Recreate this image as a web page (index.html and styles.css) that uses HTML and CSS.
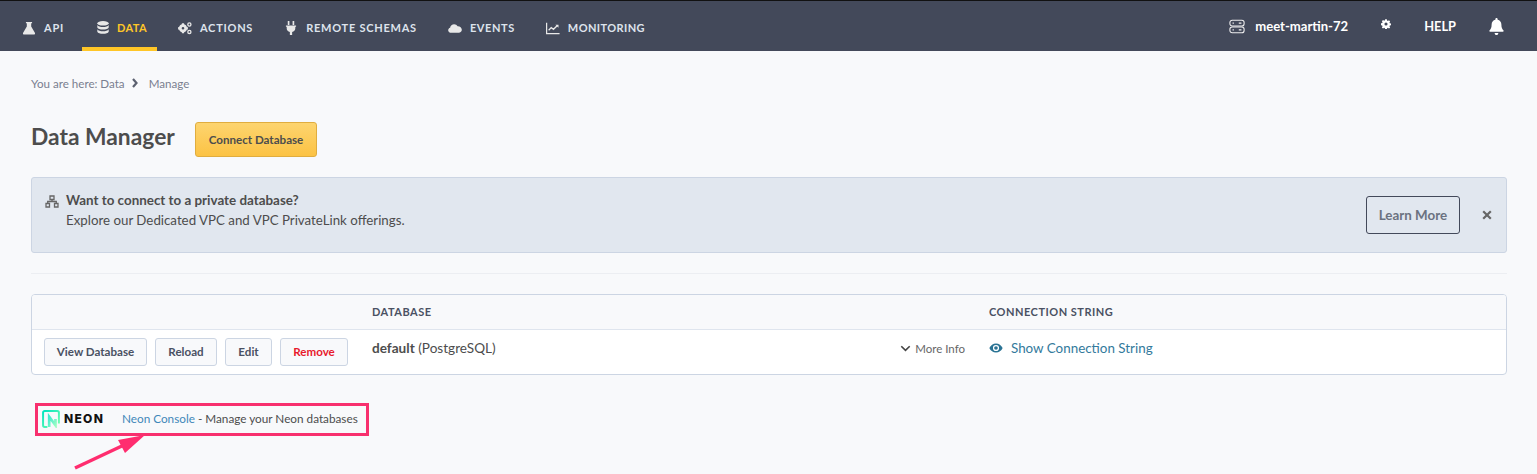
FILE: index.html
```html
<!DOCTYPE html>
<html lang="en">
<head>
  <meta charset="UTF-8" />
  <meta name="viewport" content="width=device-width, initial-scale=1" />
  <title>Data Manager</title>
  <link rel="stylesheet" href="styles.css">
</head>
<body>
  <header class="topbar">
    <nav class="nav-left">
      <a class="nav-item nav-api" href="#">
        <svg class="nav-icon" viewBox="0 0 16 16"><path d="M4.500 1h7v1.500h-1v3.800l4.200 7c.6 1.200 0 2.200-1.200 2.200H2.500c-1.200 0-1.800-1-1.200-2.200l4.200-7V2.500h-1z"/></svg>
        API
      </a>
      <a class="nav-item nav-data active" href="#">
        <svg class="nav-icon db-icon" viewBox="0 0 16 16"><ellipse cx="8" cy="3.200" rx="6.500" ry="2.600"/><path d="M1.500 5.200c1 1.700 3.500 2.300 6.500 2.300s5.500-.6 6.500-2.300v2.700c-.6 1.600-3.300 2.400-6.500 2.400s-5.900-.8-6.500-2.400z"/><path d="M1.500 10c1 1.700 3.500 2.300 6.500 2.300s5.500-.6 6.500-2.300v2.800c-.6 1.600-3.300 2.400-6.500 2.400s-5.900-.8-6.500-2.400z"/></svg>
        DATA
      </a>
      <a class="nav-item nav-actions" href="#">
        <svg class="nav-icon" viewBox="0 0 16 16"><circle cx="5.700" cy="8.300" r="3" fill="none" stroke="currentColor" stroke-width="3"/><path d="M4.500 2.700h2.400l.3 2h-3zM4.500 13.900h2.400l.3-2h-3zM.1 7v2.600l2 .3V6.700zM11.300 7v2.600l-2 .3V6.700z"/><circle cx="13" cy="4" r="1.800" fill="none" stroke="currentColor" stroke-width="1.500"/><circle cx="13" cy="12.500" r="1.800" fill="none" stroke="currentColor" stroke-width="1.500"/></svg>
        ACTIONS
      </a>
      <a class="nav-item nav-remote" href="#">
        <svg class="nav-icon" viewBox="0 0 16 16"><path d="M4.300 0h1.900v4.500H4.300zM9.800 0h1.900v4.500H9.800zM2.200 5h11.600v1.600h-.9v2c0 2.200-1.600 3.700-3.600 4V16H6.700v-3.400c-2-.3-3.600-1.800-3.600-4v-2h-.9z"/></svg>
        REMOTE SCHEMAS
      </a>
      <a class="nav-item nav-events" href="#">
        <svg class="nav-icon" viewBox="0 0 16 16"><path d="M3.600 13.500C1.600 13.500.2 12.200.2 10.500c0-1.400.9-2.500 2.200-2.900C2.800 5.400 4.700 3.700 7 3.700c1.700 0 3.200.9 4 2.400 2.500-.2 4.800 1.700 4.800 4 0 1.900-1.500 3.400-3.500 3.400z"/></svg>
        EVENTS
      </a>
      <a class="nav-item nav-monitoring" href="#">
        <svg class="nav-icon" viewBox="0 0 16 16"><path d="M.7 2v12.500H15.500" fill="none" stroke="currentColor" stroke-width="1.400"/><path d="M3 10.500 6 7.500l2.500 2L13 5.200" fill="none" stroke="currentColor" stroke-width="1.500"/><path d="M10.700 4.200h3.600v3.600z"/></svg>
        MONITORING
      </a>
    </nav>
    <div class="nav-right">
      <a class="project" href="#">
        <svg class="project-icon" viewBox="0 0 18 16"><rect x="1" y="1" width="16" height="6.500" rx="2.600"/><rect x="1" y="8.500" width="16" height="6.500" rx="2.600"/><path d="M4 4.200h1.500M11 4.200h3M4 11.800h1.500M11 11.800h3"/></svg>
        meet-martin-72
      </a>
      <a class="settings" href="#">
        <svg viewBox="0 0 16 16"><path fill-rule="evenodd" d="M6.700.5h2.600l.4 2 1.300.6 1.800-1.100 1.800 1.900-1.100 1.700.6 1.300 2 .4v2.600l-2 .4-.6 1.300 1.100 1.800-1.800 1.800-1.800-1.100-1.300.6-.4 2H6.700l-.4-2-1.300-.6-1.800 1.100-1.800-1.800 1.100-1.800-.6-1.300-2-.4V6.800l2-.4.6-1.300L1.400 3.400l1.800-1.900L5 2.600l1.300-.6zM8 5.500a2.500 2.500 0 1 0 0 5 2.500 2.500 0 0 0 0-5z"/></svg>
      </a>
      <a class="help" href="#">HELP</a>
      <a class="bell" href="#">
        <svg viewBox="0 0 16 18"><path d="M8 0c.7 0 1.200.5 1.200 1.200v.6c2.500.5 4 2.500 4 5 0 3.600 1 5 2.300 6.400.4.500.1 1.300-.7 1.300H1.200c-.8 0-1.100-.8-.7-1.300C1.800 11.800 2.800 10.400 2.800 6.800c0-2.500 1.500-4.500 4-5v-.6C6.800.5 7.300 0 8 0zM6 15.800h4c0 1.200-.9 2.200-2 2.200s-2-1-2-2.200z"/></svg>
      </a>
    </div>
  </header>

  <main class="content">
    <div class="breadcrumb">
      <span>You are here: Data</span>
      <svg class="crumb-sep" viewBox="0 0 8 10"><path d="M2 1l3.500 4L2 9"/></svg>
      <span>Manage</span>
    </div>

    <div class="page-head">
      <h2>Data Manager</h2>
      <button class="btn-yellow">Connect Database</button>
    </div>

    <section class="banner">
      <svg class="banner-icon" viewBox="0 0 14 13"><path d="M5 1h4v3.500H5zM1 8.500h3.500V12H1zM9.500 8.500H13V12H9.500zM7 4.500v2M2.700 8.500v-2h8.600v2"/></svg>
      <div class="banner-text">
        <strong>Want to connect to a private database?</strong>
        <span>Explore our Dedicated VPC and VPC PrivateLink offerings.</span>
      </div>
      <a class="btn-outline" href="#">Learn More</a>
      <svg class="banner-close" viewBox="0 0 10 10"><path d="M1.200 1.200l7.600 7.600M8.800 1.200L1.200 8.800"/></svg>
    </section>

    <hr class="divider" />

    <section class="db-table">
      <div class="db-row db-head">
        <div></div>
        <div>DATABASE</div>
        <div>CONNECTION STRING</div>
      </div>
      <div class="db-row db-body">
        <div class="db-actions">
          <button class="btn-plain btn-view">View Database</button>
          <button class="btn-plain btn-reload">Reload</button>
          <button class="btn-plain btn-edit">Edit</button>
          <button class="btn-plain btn-danger">Remove</button>
        </div>
        <div class="db-name">
          <span><b>default</b> (PostgreSQL)</span>
          <a class="more-info" href="#">
            <svg viewBox="0 0 12 8"><path d="M1.200 1.400 6 6.200l4.800-4.800"/></svg>
            More Info
          </a>
        </div>
        <div class="db-conn">
          <a class="show-conn" href="#">
            <svg viewBox="0 0 16 12"><path fill-rule="evenodd" d="M8 .5C4.500.5 1.600 2.600 0 6c1.600 3.400 4.500 5.500 8 5.500s6.400-2.100 8-5.500C14.400 2.600 11.500.5 8 .5zm0 1.800a3.700 3.700 0 1 1 0 7.400 3.700 3.700 0 0 1 0-7.400z"/><circle cx="8" cy="6" r="2.200"/></svg>
            Show Connection String
          </a>
        </div>
      </div>
    </section>

    <div class="neon-callout">
      <span class="neon-logo">
        <svg viewBox="0 0 20 20"><defs><linearGradient id="neon-grad" x1="0" y1="0" x2="1" y2="1"><stop offset="0" stop-color="#00e5bf"/><stop offset="1" stop-color="#7fffb0"/></linearGradient></defs><path fill="none" stroke="url(#neon-grad)" stroke-width="2.200" d="M6 18.800H3a1.800 1.800 0 0 1-1.800-1.800V3A1.800 1.800 0 0 1 3 1.200h14A1.800 1.800 0 0 1 18.800 3v12"/><path fill="none" stroke="url(#neon-grad)" stroke-width="3" opacity=".75" d="M8 18.800V7.500l7 9.500V10"/></svg>
        <b>NEON</b>
      </span>
      <span class="neon-text"><a href="#">Neon Console</a> - Manage your Neon databases</span>
    </div>
  </main>

  <svg class="arrow" viewBox="0 0 80 40"><path d="M1 37 L50 14" stroke="#ff2d6f" stroke-width="3.500" fill="none"/><path d="M71 4 L44 9 L51 22z" fill="#ff2d6f"/></svg>
</body>
</html>
```

FILE: styles.css
```css
* {
  box-sizing: border-box;
}
html, body {
  height: 100%;
}
body {
  margin: 0;
  background-color: #f8f9fb;
  color: #4d4d4d;
  font-family: "Lato", sans-serif;
  font-size: 13.4px;
  overflow: hidden;
  position: relative;
}
a {
  color: inherit;
  text-decoration: none;
}
button {
  font-family: inherit;
  cursor: pointer;
}

/* top bar */
.topbar {
  height: 51px;
  background-color: #43495a;
  border-top: 1px solid #111;
  display: flex;
  justify-content: space-between;
}
.nav-left {
  display: flex;
}
.nav-item {
  display: flex;
  align-items: center;
  gap: 8px;
  color: #dee3ec;
  font-size: 11px;
  font-weight: 700;
  letter-spacing: .75px;
  padding-top: 7px;
  border-bottom: 4px solid transparent;
  white-space: nowrap;
}
.nav-item svg {
  fill: #e8e8e8;
  color: #e8e8e8;
  width: 14px;
  height: 14px;
}
.nav-api { margin-left: 22px; }
.nav-data { margin-left: 18px; width: 75px; padding-left: 14px; gap: 7px; letter-spacing: .4px; }
.nav-actions { margin-left: 21px; }
.nav-remote { margin-left: 31px; }
.nav-events { margin-left: 31px; letter-spacing: .6px; }
.nav-monitoring { margin-left: 31px; letter-spacing: .4px; }
.nav-item .db-icon {
  height: 15px;
}
.nav-item.active {
  color: #ffc627;
  border-bottom-color: #ffc627;
}

.nav-right {
  display: flex;
  align-items: center;
  color: #fff;
  font-weight: 700;
}
.project {
  display: flex;
  align-items: center;
  gap: 10px;
  font-size: 13.1px;
}
.project-icon {
  width: 16px;
  height: 15px;
  fill: none;
  stroke: #eee;
  stroke-width: 1.200;
}
.settings {
  display: flex;
  margin-left: 33px;
  margin-bottom: 4px;
}
.settings svg {
  width: 10px;
  height: 10px;
  fill: #fff;
}
.help {
  margin-left: 33px;
  font-size: 12.8px;
}
.bell {
  display: flex;
  margin-left: 33px;
  margin-right: 33px;
}
.bell svg {
  width: 15px;
  height: 17px;
  fill: #fff;
}

/* page */
.content {
  padding: 0 30px 0 31px;
}
.breadcrumb {
  display: flex;
  align-items: center;
  margin-top: 24px;
  height: 16px;
  font-size: 11.6px;
  color: #7a7f90;
}
.crumb-sep {
  width: 8px;
  height: 10px;
  margin: 0 10px 0 6px;
  fill: none;
  stroke: #5c6170;
  stroke-width: 2.200;
}
.page-head {
  display: flex;
  align-items: center;
  margin-top: 31px;
}
.page-head h2 {
  width: 164px;
  margin: -7px 0 0;
  font-size: 22.8px;
  font-weight: 700;
  color: #4d4d4d;
}
.btn-yellow {
  width: 122px;
  height: 35px;
  padding: 0;
  font-size: 11.6px;
  font-weight: 700;
  color: #4d4d4d;
  background: linear-gradient(#fdd46f, #fcc344);
  border: 1px solid #e0ad3f;
  border-radius: 3px;
}

.banner {
  display: flex;
  align-items: center;
  height: 76px;
  margin-top: 20px;
  padding: 0 13px;
  background-color: #e1e7ef;
  border: 1px solid #ccd5e3;
  border-radius: 3px;
}
.banner-icon {
  width: 14px;
  height: 13px;
  margin-right: 7px;
  margin-top: -28px;
  fill: none;
  stroke: #666;
  stroke-width: 1.300;
}
.banner-text {
  flex: 1;
  display: flex;
  flex-direction: column;
  gap: 2px;
  margin-top: -10px;
  line-height: 18px;
}
.banner-text span {
  font-size: 13.3px;
}
.banner-text strong {
  font-weight: 700;
}
.btn-outline {
  width: 94px;
  height: 38px;
  line-height: 36px;
  text-align: center;
  font-weight: 700;
  color: #6b7280;
  border: 1px solid #43495a;
  border-radius: 3px;
  margin-right: 22px;
}
.banner-close {
  width: 10px;
  height: 10px;
  margin-right: 1px;
  fill: none;
  stroke: #666;
  stroke-width: 2.200;
}
.divider {
  margin: 20px 0;
  border: 0;
  border-top: 1px solid #eceef2;
}

.db-table {
  background-color: #fff;
  border: 1px solid #ccd5e3;
  border-radius: 4px;
  overflow: hidden;
}
.db-row {
  display: grid;
  grid-template-columns: 340px 617px 1fr;
}
.db-head {
  height: 35px;
  align-items: center;
  padding-bottom: 2px;
  background-color: #f8f9fb;
  border-bottom: 1px solid #dfe5ee;
  font-size: 11px;
  font-weight: 700;
  letter-spacing: .5px;
  color: #4a5163;
}
.db-body {
  height: 44px;
  align-items: center;
}
.db-actions {
  display: flex;
  gap: 8px;
  padding-left: 12px;
}
.btn-plain {
  height: 28px;
  padding: 0 0 2px;
  font-size: 11.6px;
  font-weight: 700;
  color: #4a5163;
  background-color: #f8f9fb;
  border: 1px solid #ccd5e3;
  border-radius: 3px;
}
.btn-view { width: 103px; }
.btn-reload { width: 62px; }
.btn-edit { width: 47px; }
.btn-danger {
  width: 68px;
  color: #e8192c;
}
.db-name {
  display: flex;
  justify-content: space-between;
  align-items: center;
  margin-top: -8px;
  padding-right: 24px;
  font-size: 13.6px;
}
.more-info {
  display: flex;
  align-items: center;
  gap: 4px;
  font-size: 11.5px;
  color: #666;
}
.more-info svg {
  width: 11px;
  height: 7px;
  fill: none;
  stroke: #444;
  stroke-width: 1.800;
}
.db-conn {
  margin-top: -8px;
}
.show-conn {
  display: flex;
  align-items: center;
  gap: 8px;
  color: #337a9c;
}
.show-conn svg {
  width: 14px;
  height: 10px;
  fill: #2a7394;
}

.neon-callout {
  display: flex;
  align-items: center;
  width: 334px;
  height: 33px;
  margin-top: 28px;
  margin-left: 4px;
  padding: 0 0 2px 4px;
  border: 3px solid #f8306e;
}
.neon-logo {
  display: flex;
  align-items: center;
  gap: 4px;
  width: 80px;
}
.neon-logo svg {
  width: 18px;
  height: 18px;
}
.neon-logo b {
  font-family: "Inter", sans-serif;
  font-size: 12px;
  font-weight: 800;
  letter-spacing: 1.3px;
  color: #111;
}
.neon-text {
  font-size: 11.75px;
  white-space: nowrap;
}
.neon-text a {
  color: #3f87b9;
}
.arrow {
  position: absolute;
  left: 74px;
  top: 431px;
  width: 80px;
  height: 40px;
}
```
